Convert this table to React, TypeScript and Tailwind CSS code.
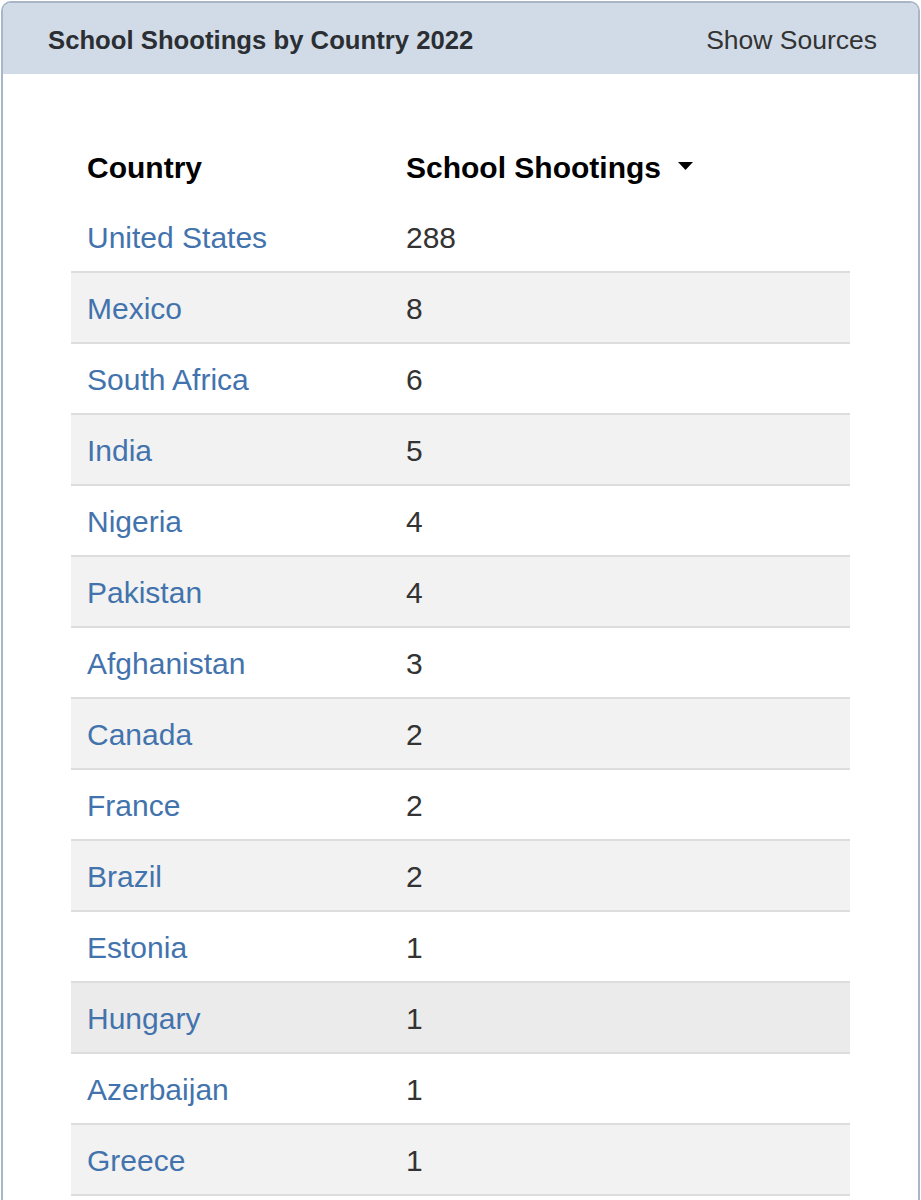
const rows: [string, number][] = [
  ['United States', 288],
  ['Mexico', 8],
  ['South Africa', 6],
  ['India', 5],
  ['Nigeria', 4],
  ['Pakistan', 4],
  ['Afghanistan', 3],
  ['Canada', 2],
  ['France', 2],
  ['Brazil', 2],
  ['Estonia', 1],
  ['Hungary', 1],
  ['Azerbaijan', 1],
  ['Greece', 1],
];

export default function App() {
  return (
    <div className="h-[1200px] overflow-hidden bg-white pt-[1px] px-[1px] font-['Liberation_Sans',Arial,sans-serif]">
      <div className="h-[1400px] border-2 border-b-0 border-[#a9b6c7] rounded-t-[10px] overflow-hidden bg-white">
        {/* Panel header */}
        <div className="h-[71px] bg-[#d1dbe7] flex items-center justify-between pl-[45px] pr-[41px] pt-[4px]">
          <h2 className="text-[25.7px] font-bold text-[#2b2f33]">School Shootings by Country 2022</h2>
          <button className="text-[26.5px] text-[#333]">Show Sources</button>
        </div>

        <div className="px-[68px] pt-[57px]">
          <table className="w-full border-collapse">
            <thead>
              <tr className="h-[70px]">
                <th className="w-[319px] text-left pl-4 pt-[2px] text-[30px] font-bold text-black">Country</th>
                <th className="text-left pl-4 pt-[2px] text-[30px] font-bold text-black">
                  <span className="inline-flex items-center gap-[17px]">
                    School Shootings
                    <svg width="15" height="8" viewBox="0 0 15 8" className="mt-[-2px]">
                      <path d="M0 0h15L7.5 8z" fill="#000" />
                    </svg>
                  </span>
                </th>
              </tr>
            </thead>
            <tbody>
              {rows.map(([country, n], i) => (
                <tr
                  key={country}
                  className={
                    'h-[71px] border-b-2 border-[#dddddd] ' +
                    (country === 'Hungary' ? 'bg-[#ebebeb]' : i % 2 === 1 ? 'bg-[#f2f2f2]' : 'bg-white')
                  }
                >
                  <td className="pl-4 pt-[2px] text-[30px] text-[#4373ad]">{country}</td>
                  <td className="pl-4 pt-[2px] text-[30px] text-[#333]">{n}</td>
                </tr>
              ))}
            </tbody>
          </table>
        </div>
      </div>
    </div>
  );
}
